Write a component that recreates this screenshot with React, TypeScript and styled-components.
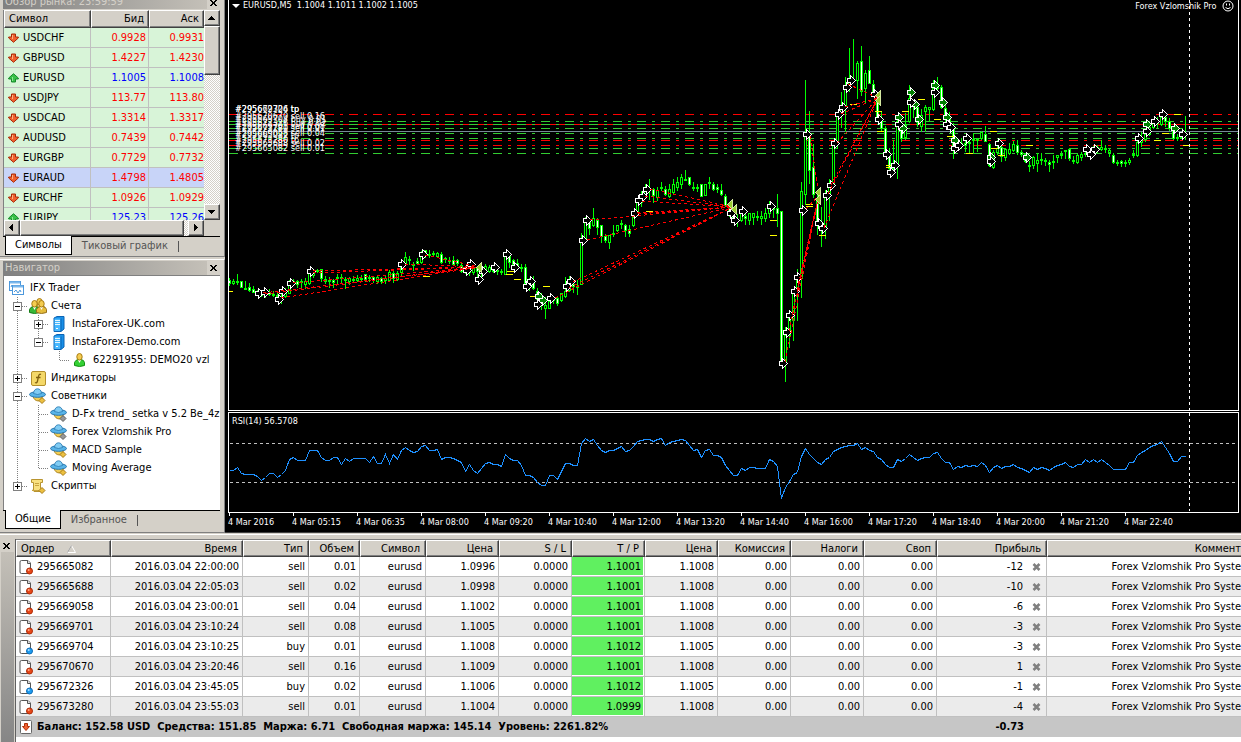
import React from 'react';
import styled, { createGlobalStyle, css } from 'styled-components';

const FACE = '#d4d0c8';
const FONT = '"DejaVu Sans Condensed", "Liberation Sans", sans-serif';

const GlobalStyle = createGlobalStyle`
  *, *::before, *::after { box-sizing: border-box; }
  body {
    margin: 0;
    background: ${FACE};
    color: #000;
    font: 11px/14px ${FONT};
    overflow-x: hidden;
  }
  button, table { font: inherit; color: inherit; }
  svg { display: block; flex: none; }
`;

const raised = css`
  background: ${FACE};
  border: 1px solid;
  border-color: #fff #404040 #404040 #fff;
  box-shadow: inset -1px -1px 0 #808080;
`;

/* ---------- page frame ---------- */

const Page = styled.div`
  display: flex;
  flex-direction: column;
  min-height: 100vh;
`;

const Workspace = styled.div`
  display: grid;
  grid-template-columns: 225px minmax(0, 1fr);
`;

const Sidebar = styled.div`
  display: flex;
  flex-direction: column;
  gap: 2px;
`;

const Panel = styled.section<{ $cut?: boolean }>`
  display: flex;
  flex-direction: column;
  padding: ${p => (p.$cut ? '0 4px 1px 3px' : '1px 4px 3px 3px')};
  border: 1px solid;
  border-width: ${p => (p.$cut ? '0 1px 1px 0' : '1px 1px 1px 0')};
  border-color: #fff #808080 #808080 #fff;
`;

const TitleBar = styled.header<{ $cut?: boolean }>`
  display: flex;
  align-items: ${p => (p.$cut ? 'flex-end' : 'center')};
  height: ${p => (p.$cut ? 9 : 14)}px;
  overflow: hidden;
`;

const Title = styled.h2`
  flex: 1;
  margin: 0;
  padding: 0 2px;
  font-size: 11px;
  line-height: 14px;
  font-weight: 400;
  color: ${FACE};
  background: linear-gradient(90deg, #808080, #c4c0b8);
  white-space: nowrap;
`;

const CloseButton = styled.button`
  display: grid;
  place-items: center;
  width: 13px;
  height: 13px;
  padding: 0;
  border: 0;
  background: transparent;
`;

const TabStrip = styled.nav`
  display: flex;
  align-items: stretch;
  height: 19px;
  padding-left: 2px;
  border-top: 1px solid #000;
`;

const Tab = styled.button<{ $active?: boolean }>`
  display: flex;
  align-items: center;
  padding: 0 9px;
  border: 1px solid transparent;
  border-top: 0;
  background: transparent;
  color: #555;
  white-space: nowrap;
  ${p =>
    p.$active &&
    css`
      margin-top: -1px;
      background: #fff;
      color: #000;
      border-color: #000;
    `}
`;

const TabDivider = styled.span`
  align-self: center;
  width: 1px;
  height: 11px;
  background: #555;
`;

/* ---------- market watch ---------- */

const WatchBody = styled.div`
  display: grid;
  grid-template-columns: minmax(0, 1fr) 16px;
  grid-template-rows: 210px 16px;
  border-left: 1px solid #808080;
  margin-top: 1px;
`;

const WatchClip = styled.div`
  overflow: hidden;
`;

const WatchTable = styled.table`
  width: 100%;
  table-layout: fixed;
  border-collapse: separate;
  border-spacing: 0;
`;

const WatchHead = styled.th<{ $left?: boolean }>`
  ${raised}
  height: 18px;
  padding: 0 4px;
  font-weight: 400;
  text-align: ${p => (p.$left ? 'left' : 'right')};
`;

const WatchRow = styled.tr<{ $selected?: boolean }>`
  background: ${p => (p.$selected ? '#c8d4f8' : '#d8f4d8')};
`;

const WatchCell = styled.td<{ $tone?: string; $last?: boolean }>`
  height: 20px;
  padding: 0 ${p => (p.$last ? 0 : 2)}px 0 4px;
  border-bottom: 1px solid #c0c0c0;
  border-right: ${p => (p.$last ? '0' : '1px solid #c0c0c0')};
  color: ${p => p.$tone ?? '#000'};
  text-align: ${p => (p.$tone ? 'right' : 'left')};
`;

const IconLabel = styled.span`
  display: flex;
  align-items: center;
  gap: 4px;
  white-space: pre;
`;

const ScrollTrack = styled.div<{ $row?: boolean }>`
  display: flex;
  flex-direction: ${p => (p.$row ? 'row' : 'column')};
  background: repeating-conic-gradient(#fff 0 25%, ${FACE} 0 50%) 0 0 / 2px 2px;
`;

const ScrollButton = styled.button`
  ${raised}
  display: grid;
  place-items: center;
  width: 16px;
  height: 16px;
  padding: 0;
`;

const ScrollThumb = styled.div<{ $row?: boolean }>`
  ${raised}
  ${p => (p.$row ? 'width: 164px; margin-right: auto;' : 'height: 49px; margin-bottom: auto;')}
`;

/* ---------- navigator ---------- */

const Tree = styled.ul`
  height: 235px;
  margin: 0;
  padding: 3px 0 0 3px;
  list-style: none;
  background: #fff;
  border-top: 1px solid #808080;
  border-left: 1px solid #808080;
  overflow: hidden;
`;

const TreeItem = styled.li`
  display: flex;
  align-items: center;
  height: 18px;
  white-space: nowrap;
`;

const GuideButton = styled.button`
  padding: 0;
  border: 0;
  background: transparent;
`;

const TreeIcon = styled.span`
  display: grid;
  place-items: center;
  flex: none;
  width: 18px;
  height: 18px;
  margin: 0 4px 0 1px;
`;

/* ---------- chart ---------- */

const ChartWindow = styled.section`
  position: relative;
  display: flex;
  flex-direction: column;
  min-width: 0;
  height: 533px;
  padding: 0 2px 0 3px;
  background: #000;
  color: #fff;
  border-bottom: 1px solid #404040;
  font-size: 9px;
  line-height: 11px;
`;

const Pane = styled.div<{ $height: number; $first?: boolean }>`
  height: ${p => p.$height}px;
  overflow: hidden;
  border: 1px solid #fff;
  border-top-width: ${p => (p.$first ? 0 : 1)}px;
  margin-bottom: ${p => (p.$first ? 1 : 0)}px;
`;

const Caption = styled.div<{ $top: number; $right?: boolean }>`
  position: absolute;
  top: ${p => p.$top}px;
  ${p => (p.$right ? 'right: 7px;' : 'left: 7px;')}
  display: flex;
  align-items: center;
  gap: 3px;
  white-space: pre;
`;

const OrderLabel = styled.span<{ $line: number }>`
  position: absolute;
  left: 10px;
  top: ${p => p.$line - 10}px;
  white-space: nowrap;
`;

const TimeAxis = styled.div`
  display: flex;
  overflow: hidden;
`;

const TimeLabel = styled.span`
  flex: none;
  width: 64px;
  white-space: nowrap;

  &::before {
    content: '';
    display: block;
    width: 1px;
    height: 3px;
    margin: 0 0 1px 1px;
    background: #fff;
  }
`;

/* ---------- terminal ---------- */

const Terminal = styled.section`
  flex: 1;
  display: grid;
  grid-template-columns: 16px minmax(0, 1fr);
  margin-top: 1px;
  padding-top: 4px;
  border-top: 1px solid #fff;
`;

const Gutter = styled.div`
  display: flex;
  flex-direction: column;
  border-right: 1px solid #606060;
`;

const Grip = styled.div`
  flex: 1;
  margin: 0 1px;
  background: linear-gradient(180deg, #c4c0b8, #868686);
`;

const OrdersClip = styled.div`
  overflow: hidden;
  background: #fff;
  border-top: 1px solid #808080;
`;

const Orders = styled.table`
  width: 100%;
  table-layout: fixed;
  border-collapse: separate;
  border-spacing: 0;
`;

const OrdersHead = styled.th<{ $left?: boolean; $flush?: boolean }>`
  ${raised}
  height: 17px;
  padding: 0 ${p => (p.$flush ? 0 : 5)}px 0 4px;
  font-weight: 400;
  text-align: ${p => (p.$left ? 'left' : 'right')};
  white-space: nowrap;
  overflow: hidden;
  ${p => p.$flush && 'border-right: 0; box-shadow: inset 0 -1px 0 #808080;'}
`;

const OrdersRow = styled.tr`
  background: #fff;
  &:nth-child(even) { background: #ebebeb; }
`;

const OrdersCell = styled.td<{ $hit?: boolean; $last?: boolean }>`
  height: 20px;
  padding: 0 ${p => (p.$last ? 0 : 3)}px 0 3px;
  border-bottom: 1px solid #c0c0c0;
  border-right: ${p => (p.$last ? '0' : '1px solid #c0c0c0')};
  text-align: right;
  white-space: nowrap;
  overflow: hidden;
  ${p =>
    p.$hit &&
    css`
      background: #60f060;
      box-shadow: inset -1px -1px 0 #fff;
    `}
`;

const ProfitBox = styled.span`
  display: flex;
  align-items: center;
  justify-content: flex-end;
  gap: 7px;
`;

const SummaryCell = styled.td`
  height: 20px;
  padding: 0 23px 0 3px;
  background: #c6c6c6;
  font-weight: 700;
  text-align: right;
  white-space: nowrap;
`;

/* ---------- icons ---------- */

const Cross = ({ color = '#000' }: { color?: string }) => (
  <svg width="7" height="6" viewBox="0 0 7 6" shapeRendering="crispEdges">
    <path d="M0 0h2v1h-2zM5 0h2v1h-2zM1 1h2v1h-2zM4 1h2v1h-2zM2 2h3v2h-3zM1 4h2v1h-2zM4 4h2v1h-2zM0 5h2v1h-2zM5 5h2v1h-2z" fill={color} />
  </svg>
);

const HeavyCross = () => (
  <svg width="9" height="8" viewBox="0 0 9 8">
    <path d="M1.500 1L7.500 7M7.500 1L1.500 7" stroke="#808080" strokeWidth="2.600" />
  </svg>
);

const Triangle = ({ d }: { d: string }) => (
  <svg width="8" height="8" viewBox="0 0 8 8" shapeRendering="crispEdges">
    <path d={d} fill="#000" />
  </svg>
);

const TickIcon = ({ up }: { up: boolean }) => (
  <svg width="11" height="10" viewBox="0 0 11 10">
    <path
      d={up ? 'M5.500.7L10.300 5V6H7.500V9H3.500V6H.7V5z' : 'M5.500 9.300L.7 5V4H3.500V1H7.500V4H10.300V5z'}
      fill={up ? '#38c048' : '#f06030'}
      stroke={up ? '#158a28' : '#a82a08'}
    />
    <path d={up ? 'M4.500 4V8' : 'M4.500 2V6'} stroke={up ? '#8ce890' : '#ffb080'} />
  </svg>
);

const OrderIcon = ({ sell }: { sell: boolean }) => (
  <svg width="14" height="16" viewBox="0 0 14 16">
    <path d="M2.500 1.500h6.500l2.500 2.500v10.500h-9q-1.500 0-1.500-1.500V3q0-1.500 1.500-1.500z" fill="#fff" stroke="#555" />
    <path d="M8.500 1.500v3h3" fill="#e0e0e0" stroke="#555" />
    <circle cx="10.500" cy="12" r="3" fill={sell ? '#e84818' : '#1f9cf0'} stroke={sell ? '#b02c08' : '#0c6cb8'} />
    <circle cx="9.700" cy="11" r="1" fill={sell ? '#ffa888' : '#a8e0ff'} />
  </svg>
);

const BalanceIcon = () => (
  <svg width="14" height="14" viewBox="0 0 14 14">
    <rect x="1.500" y=".5" width="11" height="13" rx="1" fill="#fff" stroke="#666" />
    <path d="M5.500 3.500h3v3h2L7 10.500 3.500 6.500h2z" fill="#f06030" stroke="#b03008" />
  </svg>
);

const RootIcon = () => (
  <svg width="16" height="16" viewBox="0 0 16 16">
    <rect x=".5" y="1.500" width="11" height="9" fill="#fff" stroke="#4c98dc" />
    <path d="M1 2.500h10" stroke="#7cb8ec" strokeWidth="2" />
    <path d="M2 7l1-2 1 2 1-2" fill="none" stroke="#4c98dc" />
    <rect x="3.500" y="5.500" width="11" height="9" fill="#fff" stroke="#4c98dc" />
    <path d="M4 6.500h10" stroke="#7cb8ec" strokeWidth="2" />
    <path d="M5 12l2-2 2 3 2-3 1 2" fill="none" stroke="#4c98dc" />
  </svg>
);

const Person = ({ x, y, body, edge }: { x: number; y: number; body: string; edge: string }) => (
  <g transform={`translate(${x} ${y})`}>
    <path d="M.5 12.500V9.500Q1.500 7 4 6.500h3Q10 7 10.500 9.500V12.500Q5.500 14.500 .5 12.500z" fill={body} stroke={edge} />
    <path d="M4 7l1.500 3L7 7z" fill="#fff" />
    <ellipse cx="5.500" cy="3.800" rx="2.700" ry="3.300" fill="#f4cc50" stroke="#a87c14" />
  </g>
);

const AccountsIcon = () => (
  <svg width="18" height="17" viewBox="0 0 18 17">
    <Person x={5} y={0} body="#dcb434" edge="#96701c" />
    <Person x={0} y={2} body="#38b838" edge="#147c14" />
    <Person x={7} y={2} body="#e4bc3c" edge="#96701c" />
  </svg>
);

const AccountIcon = () => (
  <svg width="14" height="16" viewBox="0 0 14 16">
    <Person x={1} y={1} body="#34d034" edge="#129012" />
  </svg>
);

const ServerIcon = () => (
  <svg width="14" height="16" viewBox="0 0 14 16">
    <path d="M2 2l3-1.500h7V13l-3 2.500H2z" fill="#1890e8" stroke="#0c64b4" />
    <path d="M2.500 2.500h6V15h-6z" fill="#48b8ff" />
    <path d="M3 4.500h5M3 6.500h5M3 8.500h5" stroke="#e4f6ff" />
    <path d="M9 2.500V15" stroke="#0c64b4" />
    <path d="M4 12.500h2" stroke="#fff" />
  </svg>
);

const IndicatorIcon = () => (
  <svg width="15" height="15" viewBox="0 0 15 15">
    <rect x=".5" y=".5" width="14" height="14" rx="1.500" fill="#f4d868" stroke="#b4902c" />
    <path d="M10 3.500q-2-1-2.500 2L6.500 10q-.5 2.500-2.500 1.500M5 6.500h4.500" fill="none" stroke="#806010" strokeWidth="1.300" />
  </svg>
);

const AdvisorIcon = ({ muted }: { muted?: boolean }) => (
  <svg width="18" height="16" viewBox="0 0 18 16">
    <path d="M4 8q1 5 6 5l3-1V8z" fill="#f0cc54" stroke="#b08820" />
    <ellipse cx="8.500" cy="6.500" rx="8" ry="2.800" fill="#58b4e8" stroke="#2878b0" />
    <path d="M4.500 5.500Q5 .8 8.500 .8T12.500 5.500Q8.500 7.500 4.500 5.500z" fill="#80ccf4" stroke="#2878b0" strokeWidth=".8" />
    <path d="M13 9.500l3 3-3 3-3-3z" fill={muted ? '#989898' : '#ecc040'} stroke={muted ? '#606060' : '#a87c18'} />
  </svg>
);

const ScriptIcon = () => (
  <svg width="16" height="16" viewBox="0 0 16 16">
    <path d="M1.500 1.500h11v3h-2v6h1v3H4l-1.500-1.500h1v-7.500h-2z" fill="#f8e080" stroke="#b89430" />
    <path d="M5 5.500h4M5 7.500h4M2 12.500h7" stroke="#c8a440" />
    <path d="M12 9.500l3 3-3 3-3-3z" fill="#ecc040" stroke="#a87c18" />
  </svg>
);

const Smiley = () => (
  <svg width="12" height="12" viewBox="0 0 12 12" fill="none" stroke="#fff">
    <circle cx="6" cy="6" r="5" />
    <path d="M3.500 7.500Q6 10 8.500 7.500" />
    <path d="M4.500 3.500v2M7.500 3.500v2" />
  </svg>
);

/* ---------- tree guides ---------- */

type GuideKind = 'blank' | 'line' | 'tee' | 'end' | 'plus' | 'minus' | 'minusEnd' | 'plusEnd';

const Guide = ({ kind, label }: { kind: GuideKind; label: string }) => {
  const box = kind.startsWith('plus') || kind.startsWith('minus');
  const ends = kind.toLowerCase().endsWith('end');
  const drawing = (
    <svg width="21" height="18" viewBox="0 0 21 18" fill="none" shapeRendering="crispEdges">
      {kind !== 'blank' && <path d={ends ? 'M10.500 0V10' : 'M10.500 0V18'} stroke="#808080" strokeDasharray="1 1" />}
      {kind !== 'blank' && kind !== 'line' && <path d="M11 9.500H21" stroke="#808080" strokeDasharray="1 1" />}
      {box && <rect x="6.500" y="5.500" width="8" height="8" fill="#fff" stroke="#808080" />}
      {box && <path d="M8 9.500h5" stroke="#000" />}
      {kind.startsWith('plus') && <path d="M10.500 7v5" stroke="#000" />}
    </svg>
  );
  return box ? <GuideButton aria-label={label}>{drawing}</GuideButton> : drawing;
};

/* ---------- data ---------- */

const quotes: [string, string, string, boolean][] = [
  ['USDCHF', '0.9928', '0.9931', false],
  ['GBPUSD', '1.4227', '1.4230', false],
  ['EURUSD', '1.1005', '1.1008', true],
  ['USDJPY', '113.77', '113.80', false],
  ['USDCAD', '1.3314', '1.3317', false],
  ['AUDUSD', '0.7439', '0.7442', false],
  ['EURGBP', '0.7729', '0.7732', false],
  ['EURAUD', '1.4798', '1.4805', false],
  ['EURCHF', '1.0926', '1.0929', false],
  ['EURJPY', '125.23', '125.26', true],
];

const tree: { guides: GuideKind[]; icon: React.ReactNode; text: string }[] = [
  { guides: [], icon: <RootIcon />, text: 'IFX Trader' },
  { guides: ['minus'], icon: <AccountsIcon />, text: 'Счета' },
  { guides: ['line', 'plus'], icon: <ServerIcon />, text: 'InstaForex-UK.com' },
  { guides: ['line', 'minusEnd'], icon: <ServerIcon />, text: 'InstaForex-Demo.com' },
  { guides: ['line', 'blank', 'end'], icon: <AccountIcon />, text: '62291955: DEMO20 vzl' },
  { guides: ['plus'], icon: <IndicatorIcon />, text: 'Индикаторы' },
  { guides: ['minus'], icon: <AdvisorIcon />, text: 'Советники' },
  { guides: ['line', 'tee'], icon: <AdvisorIcon muted />, text: 'D-Fx trend_ setka v 5.2 Be_4z' },
  { guides: ['line', 'tee'], icon: <AdvisorIcon muted />, text: 'Forex Vzlomshik Pro' },
  { guides: ['line', 'tee'], icon: <AdvisorIcon />, text: 'MACD Sample' },
  { guides: ['line', 'end'], icon: <AdvisorIcon />, text: 'Moving Average' },
  { guides: ['plusEnd'], icon: <ScriptIcon />, text: 'Скрипты' },
];

const orders: string[][] = [
  ['295665082', '2016.03.04 22:00:00', 'sell', '0.01', '1.0996', '1.1001', '1.1008', '-12'],
  ['295665688', '2016.03.04 22:05:03', 'sell', '0.02', '1.0998', '1.1001', '1.1008', '-10'],
  ['295669058', '2016.03.04 23:00:01', 'sell', '0.04', '1.1002', '1.1001', '1.1008', '-6'],
  ['295669701', '2016.03.04 23:10:24', 'sell', '0.08', '1.1005', '1.1001', '1.1008', '-3'],
  ['295669704', '2016.03.04 23:10:25', 'buy', '0.01', '1.1008', '1.1012', '1.1005', '-3'],
  ['295670670', '2016.03.04 23:20:46', 'sell', '0.16', '1.1009', '1.1001', '1.1008', '1'],
  ['295672326', '2016.03.04 23:45:05', 'buy', '0.02', '1.1006', '1.1012', '1.1005', '-1'],
  ['295673280', '2016.03.04 23:55:03', 'sell', '0.01', '1.1004', '1.0999', '1.1008', '-4'],
];

const columns: [string, number | undefined][] = [
  ['Ордер', 95], ['Время', 132], ['Тип', 66], ['Объем', 51], ['Символ', 66], ['Цена', 73], ['S / L', 73],
  ['T / P', 73], ['Цена', 73], ['Комиссия', 73], ['Налоги', 73], ['Своп', 73], ['Прибыль', 110], ['Коммент', undefined],
];

const times = [
  '4 Mar 2016', '4 Mar 05:15', '4 Mar 06:35', '4 Mar 08:00', '4 Mar 09:20', '4 Mar 10:40', '4 Mar 12:00', '4 Mar 13:20',
  '4 Mar 14:40', '4 Mar 16:00', '4 Mar 17:20', '4 Mar 18:40', '4 Mar 20:00', '4 Mar 21:20', '4 Mar 22:40',
];

// Bars at a pitch of four pixels: high, open, close, low.
const bars = `
278,280,283,285 279,283,281,284 274,281,282,284 281,281,287,287 281,288,289,289 283,287,290,291 286,289,292,292 290,292,293,295
291,293,295,296 290,295,292,297 289,292,294,295 291,294,295,296 292,295,296,297 294,297,296,303 288,296,290,297 280,293,282,293
279,283,281,283 280,281,284,287 279,281,282,288 278,284,281,288 270,283,272,284 269,275,270,277 269,270,271,272 269,269,278,281
276,279,281,283 277,280,280,287 279,280,282,287 274,278,277,283 274,277,278,282 277,279,280,288 277,281,278,284 276,279,280,282
275,280,278,281 275,278,278,280 274,274,279,281 275,278,277,281 276,277,280,282 275,281,277,283 277,278,281,283 275,280,278,283
270,280,272,281 270,273,278,282 271,279,273,280 263,272,266,275 252,263,257,265 256,259,260,264 262,264,264,270 258,261,263,264
251,262,253,263 250,250,255,257 250,254,254,257 251,254,253,256 252,256,253,256 252,254,262,263 257,258,259,262 257,261,260,263
256,260,264,265 259,260,263,265 263,265,271,272 266,270,268,273 264,268,272,275 265,272,268,274 266,268,271,276 268,271,269,276
264,270,266,272 265,271,267,272 265,267,271,272 267,270,271,274 269,271,272,274 256,274,256,274 254,256,262,267 259,260,264,268
259,263,267,269 264,267,268,271 264,267,283,284 278,283,285,290 276,281,288,289 288,291,299,302 293,297,303,309 297,308,305,318
299,308,301,308 296,300,299,303 296,298,303,305 293,300,293,301 277,296,291,297 276,290,285,291 279,284,286,292 280,286,287,294
233,284,241,284 217,238,219,242 218,222,228,234 208,225,218,226 218,220,227,234 225,225,236,242 234,236,240,242 235,242,235,248
225,233,234,236 225,230,225,231 220,223,224,228 224,225,230,236 225,229,233,236 216,225,217,226 199,213,202,214 191,202,195,206
184,195,188,198 179,190,189,199 188,189,195,202 187,197,190,200 182,187,188,190 186,189,194,195 184,196,189,197 179,192,184,193
177,187,182,190 174,184,177,188 170,179,180,180 177,177,184,185 182,187,188,190 184,187,188,191 184,184,196,196 184,195,184,195
177,182,183,188 182,184,189,190 184,187,189,192 184,190,194,195 194,196,205,206 204,208,213,216 210,213,219,220 214,219,221,226
211,220,212,221 210,216,218,224 213,220,213,224 213,217,213,224 211,216,217,220 211,218,216,224 208,218,213,221 201,213,207,217
204,209,207,217 194,208,213,226 211,211,362,364 327,363,335,381 313,335,314,347 290,320,292,340 269,291,275,320 182,278,191,297
80,194,135,204 111,135,170,183 144,167,194,197 192,198,222,234 207,222,230,246 190,227,195,238 179,195,183,220 141,184,143,187
112,143,115,148 92,115,108,127 77,108,87,131 48,87,80,91 39,80,79,82 61,80,63,98 46,61,91,95 70,88,73,103
56,70,83,83 80,84,93,95 95,95,118,120 111,118,128,131 126,128,153,154 148,155,168,171 140,168,163,170 118,163,121,178
124,126,138,141 113,137,125,139 85,121,98,122 100,100,106,117 107,107,122,126 109,126,115,131 105,111,107,131 107,109,107,121
80,109,88,110 77,86,88,92 85,87,107,108 102,108,118,122 112,118,124,128 123,128,150,158 141,144,146,147 138,144,143,148
138,143,145,151 138,142,142,152 133,140,139,152 138,139,140,151 131,138,132,139 126,134,141,141 143,144,165,166
150,167,152,168 140,152,148,154 146,147,156,161 148,157,149,160 143,153,149,154 141,150,144,151 140,145,152,154 150,152,154,156
153,154,161,162 161,165,166,171 156,165,157,168 153,163,160,171 153,160,159,164 158,160,161,165 160,162,164,171 155,162,161,168
155,157,155,162 151,155,154,158 150,150,151,158 148,149,158,160 156,160,160,163 154,162,155,163 152,157,154,160 150,154,153,156
147,153,149,155 146,149,151,154 145,150,147,152 140,149,147,150 145,148,149,152 148,152,150,156 153,155,162,163
160,162,163,165 160,161,163,166 160,163,162,166 158,162,160,164 150,155,154,157 137,155,142,156 132,142,139,146 131,139,134,141
124,134,127,135 120,127,123,128 117,123,121,127 114,124,117,125 114,117,121,126 118,121,128,130 126,128,138,139 134,138,137,140
132,137,135,138 116,135,134,139`
  .trim()
  .split(/\s+/)
  .map(bar => bar.split(',').map(Number));

const barX = (i: number) => 229 + i * 4;

// Oscillator readings, three units to a pixel.
const rsi = [
  211, 211, 203, 219, 223, 223, 223, 228, 240, 232, 220, 220, 232, 224, 212, 178, 172, 181, 181, 181, 152, 152, 152, 173,
  181, 181, 172, 172, 193, 176, 184, 175, 175, 175, 175, 188, 168, 190, 190, 163, 190, 163, 179, 152, 142, 150, 157, 154,
  140, 135, 151, 151, 149, 177, 172, 172, 175, 182, 187, 214, 193, 211, 220, 204, 191, 187, 193, 193, 198, 163, 175, 181,
  181, 196, 226, 226, 232, 247, 256, 256, 226, 226, 238, 214, 190, 190, 196, 196, 130, 115, 124, 118, 136, 150, 157, 151,
  151, 145, 139, 154, 151, 139, 125, 121, 118, 118, 124, 118, 115, 136, 128, 124, 121, 118, 121, 136, 151, 149, 172, 150,
  149, 166, 166, 173, 196, 210, 226, 226, 205, 211, 203, 202, 205, 205, 205, 178, 184, 199, 295, 262, 245, 223, 216, 169,
  146, 162, 175, 187, 193, 178, 171, 155, 148, 143, 139, 136, 136, 131, 148, 142, 150, 155, 171, 177, 193, 202, 202, 178,
  184, 176, 163, 173, 181, 175, 172, 172, 160, 156, 175, 187, 188, 208, 199, 202, 196, 200, 196, 199, 187, 196, 217, 201,
  196, 204, 199, 199, 193, 201, 205, 210, 217, 202, 207, 202, 205, 211, 201, 196, 193, 187, 198, 202, 194, 193, 179, 187,
  179, 187, 179, 187, 195, 208, 208, 208, 208, 187, 187, 165, 158, 151, 143, 137, 132, 125, 142, 160, 184, 184, 170, 169,
];

const entries: [number, number][] = [
  [259, 293], [265, 292], [279, 299], [283, 291], [291, 283], [311, 271], [402, 264], [423, 254], [471, 264], [467, 270],
  [479, 279], [483, 271], [495, 267], [507, 254], [515, 267], [531, 281], [527, 286], [538, 304], [551, 298], [567, 286],
  [571, 281], [583, 240], [587, 220], [635, 213], [639, 200], [643, 196], [647, 189], [731, 213], [735, 220], [743, 211],
  [771, 206], [783, 363], [787, 332], [790, 315], [795, 291], [798, 277], [803, 210], [807, 134], [819, 223], [823, 228],
  [827, 195], [831, 185], [835, 143], [839, 114], [843, 107], [847, 87], [851, 80], [875, 94], [879, 119], [887, 154],
  [891, 172], [895, 165], [899, 124], [911, 102], [935, 92], [947, 124], [951, 127], [955, 148], [959, 145], [967, 138],
  [999, 143], [991, 161], [1087, 149], [1095, 149], [1091, 154], [1139, 138], [1147, 131], [1155, 121], [1163, 114], [1183, 134],
];

const buys: [number, number][] = [
  [539, 296], [543, 300], [899, 117], [903, 128], [911, 92], [915, 104], [919, 119], [935, 85], [943, 102], [947, 117],
  [955, 140], [991, 157], [1027, 157], [1147, 124], [1175, 128],
];

const exits: [number, number][] = [
  [480, 267], [731, 204], [735, 209], [819, 192], [819, 199], [879, 95], [879, 100],
];

const stops: [number, number][] = [
  [229, 291], [426, 276], [510, 271], [509, 274], [517, 279], [546, 286], [533, 296], [649, 211], [773, 220], [773, 235],
  [809, 204], [809, 206], [822, 235], [853, 104], [878, 111], [880, 131], [889, 165], [889, 167], [905, 111], [921, 99],
  [937, 119], [950, 136], [969, 153], [993, 131], [994, 148], [1001, 155], [1029, 145], [1177, 114], [1165, 133],
  [1157, 140], [1186, 145],
];

const trades: { to: [number, number]; from: [number, number][] }[] = [
  { to: [480, 267], from: [[263, 293], [281, 298], [265, 294], [293, 283], [313, 271], [313, 273], [405, 264], [425, 255]] },
  { to: [733, 207], from: [[555, 298], [569, 288], [573, 282], [587, 240], [590, 220], [637, 213], [638, 214], [642, 201], [645, 196], [650, 189]] },
  { to: [819, 195], from: [[785, 362], [789, 331], [792, 315], [797, 290], [800, 277], [806, 209], [810, 136]] },
  { to: [878, 98], from: [[848, 84], [845, 107], [841, 114], [837, 143], [831, 185], [828, 194], [824, 228]] },
];

const levels: [number, string][] = [
  [121, '#32cd32'], [128, '#32cd32'], [133, '#32cd32'], [138, '#32cd32'], [148, '#32cd32'], [153, '#32cd32'],
  [114, '#f00'], [140, '#f00'], [145, '#f00'],
];

const orderLabels: [number, string][] = [
  [114, '#295669704 tp'], [114, '#295672326 tp'], [121, '#295670670 sell 0.16'], [124, '#295669704 buy 0.01'],
  [128, '#295672326 buy 0.02'], [131, '#295669701 sell 0.08'], [133, '#295673280 sell 0.01'], [138, '#295669058 sell 0.04'],
  [140, '#295665082 tp'], [145, '#295673280 tp'], [148, '#295665688 sell 0.02'], [153, '#295665082 sell 0.01'],
];

const ARROW = 'M-3.500-1.500h3v-3l5 5-5 5v-3h-3z';

/* ---------- sections ---------- */

const MarketWatch = () => (
  <Panel $cut>
    <TitleBar $cut>
      <Title>Обзор рынка: 23:59:59</Title>
      <CloseButton aria-label="Закрыть обзор рынка"><Cross /></CloseButton>
    </TitleBar>
    <WatchBody>
      <WatchClip>
        <WatchTable>
          <colgroup><col width="87" /><col width="58" /><col /></colgroup>
          <thead>
            <tr><WatchHead $left>Символ</WatchHead><WatchHead>Бид</WatchHead><WatchHead>Аск</WatchHead></tr>
          </thead>
          <tbody>
            {quotes.map(([symbol, bid, ask, up]) => {
              const tone = up ? '#00f' : '#f00';
              return (
                <WatchRow key={symbol} $selected={symbol === 'EURAUD'}>
                  <WatchCell><IconLabel><TickIcon up={up} />{symbol}</IconLabel></WatchCell>
                  <WatchCell $tone={tone}>{bid}</WatchCell>
                  <WatchCell $tone={tone} $last>{ask}</WatchCell>
                </WatchRow>
              );
            })}
          </tbody>
        </WatchTable>
      </WatchClip>
      <ScrollTrack>
        <ScrollButton aria-label="Вверх"><Triangle d="M3 2h1v1h1v1h1v1h1v1H0V5h1V4h1V3h1z" /></ScrollButton>
        <ScrollThumb />
        <ScrollButton aria-label="Вниз"><Triangle d="M0 2h7v1H6v1H5v1H4v1H3V5H2V4H1V3H0z" /></ScrollButton>
      </ScrollTrack>
      <ScrollTrack $row>
        <ScrollButton aria-label="Влево"><Triangle d="M5 0v7H4V6H3V5H2V4H1V3h1V2h1V1h1V0z" /></ScrollButton>
        <ScrollThumb $row />
        <ScrollButton aria-label="Вправо"><Triangle d="M2 0h1v1h1v1h1v1h1v1H5v1H4v1H3v1H2z" /></ScrollButton>
      </ScrollTrack>
    </WatchBody>
    <TabStrip>
      <Tab $active>Символы</Tab>
      <Tab>Тиковый график</Tab>
      <TabDivider />
    </TabStrip>
  </Panel>
);

const Navigator = () => (
  <Panel>
    <TitleBar>
      <Title>Навигатор</Title>
      <CloseButton aria-label="Закрыть навигатор"><Cross /></CloseButton>
    </TitleBar>
    <Tree>
      {tree.map(item => (
        <TreeItem key={item.text}>
          {item.guides.map((kind, i) => <Guide key={i} kind={kind} label={item.text} />)}
          <TreeIcon>{item.icon}</TreeIcon>
          {item.text}
        </TreeItem>
      ))}
    </Tree>
    <TabStrip>
      <Tab $active>Общие</Tab>
      <Tab>Избранное</Tab>
      <TabDivider />
    </TabStrip>
  </Panel>
);

const PriceDrawing = () => (
  <svg width="1009" height="410" viewBox="229 0 1009 410" fill="none" shapeRendering="crispEdges">
    <path d="M229 131.500H1238" stroke="#778899" />
    <path d="M229 124.500H1238" stroke="#f00" />
    <path d="M229 124.500H960" stroke="#32cd32" strokeDasharray="9 6 3 6" />
    {levels.map(([y, color]) => (
      <path key={y} d={`M229 ${y + 0.5}H1238`} stroke={color} strokeDasharray="9 6 3 6" />
    ))}
    {bars.map(([high, open, close, low], i) => {
      const x = barX(i);
      const top = Math.min(open, close);
      const size = Math.max(Math.abs(open - close), 1);
      return (
        <g key={i}>
          <path d={`M${x + 0.5} ${high}V${low + 1}`} stroke="#0f0" />
          <rect x={x - 0.5} y={top + 0.5} width="2" height={size} fill={close > open ? '#fff' : '#000'} stroke="#0f0" />
        </g>
      );
    })}
    {stops.map(([x, y], i) => <path key={i} d={`M${x - 3} ${y + 0.5}h7`} stroke="#ff0" />)}
    {buys.map(([x, y], i) => <path key={i} d={ARROW} transform={`translate(${x} ${y})`} fill="#008000" stroke="#fff" />)}
    {entries.map(([x, y], i) => <path key={i} d={ARROW} transform={`translate(${x} ${y})`} fill="#000" stroke="#fff" />)}
    {trades.map(({ to, from }) =>
      from.map(([x, y], i) => <path key={`${x}-${i}`} d={`M${x} ${y}L${to[0]} ${to[1]}`} stroke="#f00" strokeDasharray="3 3" />),
    )}
    {exits.map(([x, y], i) => (
      <path key={i} d={`M${x - 3.5} ${y + 0.5}l5-5v10z`} fill="#9acd32" stroke="#d4e8a0" />
    ))}
    <path d="M1189.500 0V410" stroke="#fff" strokeDasharray="3 3" />
  </svg>
);

const RsiDrawing = () => (
  <svg width="1009" height="98" viewBox="229 413 1009 98" fill="none" shapeRendering="crispEdges">
    <path d="M230 443.500H1238M230 482.500H1238" stroke="#c0c0c0" strokeDasharray="3 3" />
    <polyline points={rsi.map((v, i) => `${barX(i) + 0.5},${400.5 + Math.floor(v / 3)}`).join(' ')} stroke="#1e90ff" />
    <path d="M1189.500 413V511" stroke="#fff" strokeDasharray="3 3" />
  </svg>
);

const Chart = () => (
  <ChartWindow>
    <Pane $height={411} $first><PriceDrawing /></Pane>
    <Pane $height={101}><RsiDrawing /></Pane>
    <TimeAxis>{times.map(time => <TimeLabel key={time}>{time}</TimeLabel>)}</TimeAxis>
    <Caption $top={0}>
      <svg width="8" height="4" viewBox="0 0 8 4"><path d="M0 0h8L4 4z" fill="#fff" /></svg>
      {'EURUSD,M5  1.1004 1.1011 1.1002 1.1005'}
    </Caption>
    <Caption $top={0} $right>Forex Vzlomshik Pro <Smiley /></Caption>
    <Caption $top={416}>RSI(14) 56.5708</Caption>
    {orderLabels.map(([line, text]) => <OrderLabel key={text} $line={line}>{text}</OrderLabel>)}
  </ChartWindow>
);

const OrdersPanel = () => (
  <Terminal>
    <Gutter>
      <CloseButton aria-label="Закрыть терминал"><Cross /></CloseButton>
      <Grip />
    </Gutter>
    <OrdersClip>
      <Orders>
        <colgroup>{columns.map(([, width], i) => <col key={i} width={width} />)}</colgroup>
        <thead>
          <tr>
            {columns.map(([name], i) => (
              <OrdersHead key={i} $left={i === 0} $flush={i === columns.length - 1}>
                {i === 0 ? (
                  <IconLabel>
                    {name}
                    <svg width="20" height="9" viewBox="0 0 20 9"><path d="M9.500 8.500l4-7 4 7z" fill="none" stroke="#fff" /><path d="M9.500 8.500l4-7" stroke="#999" /></svg>
                  </IconLabel>
                ) : name}
              </OrdersHead>
            ))}
          </tr>
        </thead>
        <tbody>
          {orders.map(([id, time, type, volume, price, target, current, profit]) => (
            <OrdersRow key={id}>
              <OrdersCell><IconLabel><OrderIcon sell={type === 'sell'} />{id}</IconLabel></OrdersCell>
              <OrdersCell>{time}</OrdersCell>
              <OrdersCell>{type}</OrdersCell>
              <OrdersCell>{volume}</OrdersCell>
              <OrdersCell>eurusd</OrdersCell>
              <OrdersCell>{price}</OrdersCell>
              <OrdersCell>0.0000</OrdersCell>
              <OrdersCell $hit>{target}</OrdersCell>
              <OrdersCell>{current}</OrdersCell>
              <OrdersCell>0.00</OrdersCell>
              <OrdersCell>0.00</OrdersCell>
              <OrdersCell>0.00</OrdersCell>
              <OrdersCell>
                <ProfitBox>{profit}<CloseButton aria-label={`Закрыть ордер ${id}`}><HeavyCross /></CloseButton></ProfitBox>
              </OrdersCell>
              <OrdersCell $last>Forex Vzlomshik Pro Syste</OrdersCell>
            </OrdersRow>
          ))}
        </tbody>
        <tfoot>
          <tr>
            <SummaryCell colSpan={12}>
              <IconLabel>
                <BalanceIcon />
                {'Баланс: 152.58 USD  Средства: 151.85  Маржа: 6.71  Свободная маржа: 145.14  Уровень: 2261.82%'}
              </IconLabel>
            </SummaryCell>
            <SummaryCell>-0.73</SummaryCell>
            <SummaryCell />
          </tr>
        </tfoot>
      </Orders>
    </OrdersClip>
  </Terminal>
);

export default function App() {
  return (
    <>
      <GlobalStyle />
      <Page>
        <Workspace>
          <Sidebar>
            <MarketWatch />
            <Navigator />
          </Sidebar>
          <Chart />
        </Workspace>
        <OrdersPanel />
      </Page>
    </>
  );
}
